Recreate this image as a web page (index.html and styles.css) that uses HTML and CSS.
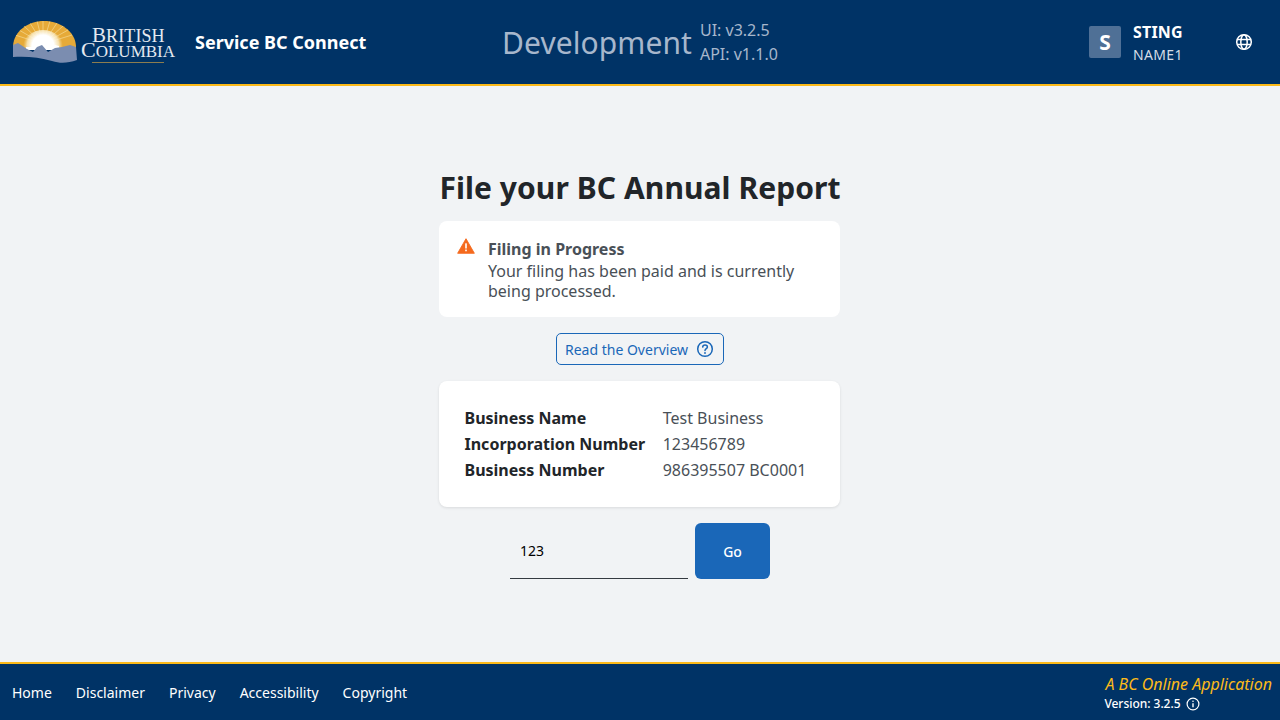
FILE: index.html
```html
<!DOCTYPE html>
<html lang="en">
<head>
<meta charset="utf-8">
<title>Service BC Connect</title>
<link rel="stylesheet" href="styles.css">
</head>
<body>
<header class="header">
  <div class="brand">
    <svg class="sun" viewBox="0 0 66 44" width="66" height="44" aria-hidden="true">
      <defs>
        <clipPath id="dome"><path d="M1 26C2 11 16 1 32 1S63 11 64 26V30H1Z"/></clipPath>
        <radialGradient id="glow" gradientUnits="userSpaceOnUse" cx="31" cy="26" r="20">
          <stop offset="0" stop-color="#fff"/>
          <stop offset=".55" stop-color="#fff"/>
          <stop offset=".8" stop-color="#fbeec9" stop-opacity=".8"/>
          <stop offset="1" stop-color="#f3d283" stop-opacity="0"/>
        </radialGradient>
      </defs>
      <g clip-path="url(#dome)">
        <rect width="66" height="44" fill="#e6aa38"/>
        <g stroke="#f0cb78" stroke-width="1">
          <path d="M31 24L3 15M31 24L7 10M31 24L12 6M31 24L18 3M31 24L25 1M31 24L31 0M31 24L38 1M31 24L45 3M31 24L51 6M31 24L56 10M31 24L60 15"/>
        </g>
        <ellipse cx="31" cy="26" rx="20" ry="16" fill="url(#glow)"/>
      </g>
      <path d="M14 27L20 27L25 21L30 17L35 22L38 27L43 25L47 26V30H14Z" fill="#fff"/>
      <path d="M1 25L6 23L15 29L21 32L25 27L30 25L36 32L43 28L50 27L58 25L64 27L65 40C56 43 49 44 40 41C28 37 12 36 1 37Z" fill="#7b8db0"/>
    </svg>
    <div class="wordmark">
      <span class="wm-top">British</span>
      <span class="wm-bottom">Columbia</span>
      <span class="wm-rule"></span>
    </div>
    <span class="app-name">Service BC Connect</span>
  </div>
  <div class="env">
    <span class="env-name">Development</span>
    <div class="versions"><span>UI: v3.2.5</span><span>API: v1.1.0</span></div>
  </div>
  <div class="account">
    <span class="avatar">S</span>
    <div class="user"><span class="user-first">STING</span><span class="user-last">NAME1</span></div>
    <svg class="globe" viewBox="0 0 20 20" width="20" height="20" fill="none" stroke="#fff" stroke-width="1.5" aria-hidden="true">
      <circle cx="10" cy="10" r="7.3"/>
      <ellipse cx="10" cy="10" rx="3.2" ry="7.3"/>
      <path d="M3.2 7.6H16.8M3.2 12.4H16.8"/>
    </svg>
  </div>
</header>

<main class="main">
  <h1 class="title">File your BC Annual Report</h1>
  <section class="card alert">
    <svg class="warn" viewBox="0 0 20 18" width="18" height="16" aria-hidden="true">
      <path d="M10 .8L19.4 17.2H.6Z" fill="#f56a1d" stroke="#f56a1d" stroke-linejoin="round"/>
      <rect x="9.1" y="6" width="1.8" height="5.8" fill="#fff"/>
      <rect x="9.1" y="13" width="1.8" height="1.9" fill="#fff"/>
    </svg>
    <div class="alert-text">
      <strong>Filing in Progress</strong>
      <p>Your filing has been paid and is currently being processed.</p>
    </div>
  </section>
  <a class="overview" href="#">Read the Overview
    <svg viewBox="0 0 20 20" width="20" height="20" fill="none" stroke="currentColor" stroke-width="1.5" aria-hidden="true">
      <circle cx="10" cy="10" r="7.3"/>
      <path d="M7.7 8.1C7.8 6.8 8.8 6 10 6S12.4 6.9 12.4 8C12.4 9.6 10 9.7 10 11.5" stroke-linecap="round"/>
      <circle cx="10" cy="14" r=".9" fill="currentColor" stroke="none"/>
    </svg>
  </a>
  <section class="card details">
    <dl class="facts">
      <dt>Business Name</dt><dd>Test Business</dd>
      <dt>Incorporation Number</dt><dd>123456789</dd>
      <dt>Business Number</dt><dd>986395507 BC0001</dd>
    </dl>
  </section>
  <form class="go-form">
    <input class="go-input" type="text" value="123" aria-label="Code">
    <button class="go-btn" type="button">Go</button>
  </form>
</main>

<footer class="footer">
  <nav class="links">
    <a href="#">Home</a><a href="#">Disclaimer</a><a href="#">Privacy</a><a href="#">Accessibility</a><a href="#">Copyright</a>
  </nav>
  <div class="meta">
    <em>A BC Online Application</em>
    <span class="ver">Version: 3.2.5
      <svg viewBox="0 0 16 16" width="16" height="16" fill="none" stroke="#fff" stroke-width="1.2" aria-hidden="true">
        <circle cx="8" cy="8" r="5.9"/>
        <path d="M8 7.2V11.2" stroke-width="1.4"/>
        <circle cx="8" cy="5.2" r=".8" fill="#fff" stroke="none"/>
      </svg>
    </span>
  </div>
</footer>
</body>
</html>
```
FILE: styles.css
```css
* { box-sizing: border-box; }
html, body { height: 100%; }
body {
  margin: 0;
  display: flex;
  flex-direction: column;
  height: 720px;
  overflow: hidden;
  background: #f1f3f5;
  font-family: "Noto Sans", sans-serif;
  font-size: 16px;
  color: #212529;
}
.header {
  height: 86px;
  flex: none;
  background: #003366;
  border-bottom: 2px solid #fcba19;
  display: flex;
  align-items: center;
  padding: 0 12px;
}
.brand { display: flex; align-items: center; width: 490px; }
.sun { flex: none; }
.wordmark {
  font-family: "Liberation Serif", serif;
  color: #e4e9f0;
  display: flex;
  flex-direction: column;
  width: 94px;
  margin-left: 3px;
  margin-top: 6px;
  text-transform: uppercase;
  white-space: nowrap;
}
.wm-top { font-size: 18px; margin-left: 11px; letter-spacing: .1px; line-height: 17px; height: 17px; }
.wm-top::first-letter { font-size: 21px; line-height: 0; }
.wm-bottom { font-size: 17px; line-height: 17px; height: 17px; margin-top: -2px; }
.wm-bottom::first-letter { font-size: 22px; line-height: 0; }
.wm-rule { display: block; height: 1px; width: 72px; margin: 2px 0 0 11px; background: #8c7d4f; }
.app-name { color: #fff; font-weight: 700; font-size: 18px; margin-left: 20px; white-space: nowrap; }
.env { display: flex; align-items: center; gap: 8px; color: #a7b7cc; }
.env-name { font-size: 30px; letter-spacing: .08px; }
.versions { display: flex; flex-direction: column; font-size: 16px; line-height: 24px; }
.account { margin-left: auto; display: flex; align-items: center; }
.avatar {
  width: 32px; height: 32px; border-radius: 2px;
  background: #4f7096; color: #fff; font-weight: 700; font-size: 21px;
  display: flex; align-items: center; justify-content: center;
}
.user { display: flex; flex-direction: column; margin-left: 12px; width: 101px; padding-top: 2px; }
.user-first { color: #fff; font-weight: 700; font-size: 16px; line-height: 24px; letter-spacing: .2px; }
.user-last { color: #d5dde7; font-size: 14px; line-height: 22px; letter-spacing: .35px; }
.globe { margin-right: 14px; }

.main {
  flex: 1;
  display: flex;
  flex-direction: column;
  align-items: center;
  padding-top: 82px;
}
.title { margin: 0 0 13px; font-size: 30px; line-height: 40px; font-weight: 700; color: #212529; letter-spacing: .07px; }
.card {
  width: 401px;
  margin-right: 1px;
  background: #fff;
  border-radius: 8px;
}
.alert { display: flex; padding: 16px 16px 16px 16.5px; gap: 13px; height: 96px; }
.warn { flex: none; margin: 1px 0 0 1.5px; }
.alert-text { color: #495057; line-height: 20px; }
.alert-text strong { display: block; font-weight: 700; line-height: 24px; height: 24px; }
.alert-text p { margin: 0; }
.overview {
  margin: 16px 0;
  height: 32px;
  width: 168px;
  display: flex; align-items: center; justify-content: center; gap: 7px;
  border: 1px solid #1a67b8;
  border-radius: 5px;
  color: #1a67b8;
  font-size: 14px;
  text-decoration: none;
}
.details { padding: 24px 25px 24px 25.5px; height: 126px; box-shadow: 0 1px 3px rgba(0,0,0,.1); }
.facts {
  margin: 0;
  display: grid;
  grid-template-columns: max-content 1fr;
  column-gap: 17.5px;
  line-height: 26px;
}
.facts dt { font-weight: 700; color: #212529; white-space: nowrap; }
.facts dd { margin: 0; color: #495057; white-space: nowrap; }
.go-form { display: flex; gap: 7px; margin-top: 16px; }
.go-input {
  width: 178px; height: 56px;
  border: 0; border-bottom: 1px solid #343a40;
  background: transparent;
  padding: 0 10px;
  font: 14px "Noto Sans", sans-serif;
  color: #000;
  outline: none;
}
.go-btn {
  width: 75px; height: 56px;
  border: 0; border-radius: 6px;
  background: #1a67b8;
  color: #fff;
  font: 500 14px "Noto Sans", sans-serif;
}
.footer {
  height: 58px;
  flex: none;
  background: #003366;
  border-top: 2px solid #fcba19;
  display: flex;
  align-items: center;
  justify-content: space-between;
  padding: 0 8px 0 12px;
  color: #fff;
}
.links { display: flex; gap: 24px; font-size: 14px; }
.links a { color: #fff; text-decoration: none; }
.meta { display: flex; flex-direction: column; }
.meta em { color: #fcba19; font-size: 16px; line-height: 24px; }
.ver { display: flex; align-items: center; gap: 4px; margin-left: -1px; font-size: 12px; font-weight: 500; line-height: 16px; letter-spacing: -.03px; }
```
